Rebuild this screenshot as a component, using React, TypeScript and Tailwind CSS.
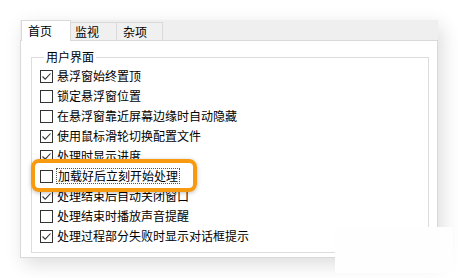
import React from 'react';

const options = [
  { label: '悬浮窗始终置顶', checked: true },
  { label: '锁定悬浮窗位置', checked: false },
  { label: '在悬浮窗靠近屏幕边缘时自动隐藏', checked: false },
  { label: '使用鼠标滑轮切换配置文件', checked: true },
  { label: '处理时显示进度', checked: true },
  { label: '加载好后立刻开始处理', checked: false, focused: true },
  { label: '处理结束后自动关闭窗口', checked: true },
  { label: '处理结束时播放声音提醒', checked: false },
  { label: '处理过程部分失败时显示对话框提示', checked: true },
];

const CheckBox = ({ checked }: { checked: boolean }) => (
  <span className="w-[13px] h-[13px] border border-[#333] bg-white flex items-center justify-center shrink-0">
    {checked && (
      <svg width="11" height="11" viewBox="0 0 11 11">
        <path d="M1.5 5.5 L4.2 8.2 L9.5 2.5" fill="none" stroke="#333" strokeWidth="1.1" />
      </svg>
    )}
  </span>
);

const App = () => {
  return (
    <div
      className="relative w-[458px] h-[278px] bg-white pt-[20px] pl-[20px] text-[12px] text-black"
      style={{ fontFamily: '"Noto Sans CJK SC", "Noto Sans", sans-serif' }}
    >
      <div className="w-[418px] h-[238px] flex flex-col bg-[#efefef] shadow-[4px_6px_18px_rgba(0,0,0,0.14)]">
        {/* tabs */}
        <div className="flex h-[20px] items-end pl-[1px]">
          <div className="relative z-10 h-[21px] w-[50px] -mb-px bg-white border border-b-0 border-[#d9d9d9] pl-[6px] leading-[20px]">
            首页
          </div>
          <div className="h-[18px] w-[46px] bg-[#f0f0f0] border border-b-0 border-l-0 border-[#d9d9d9] pl-[4px] leading-[18px]">
            监视
          </div>
          <div className="h-[18px] w-[46px] bg-[#f0f0f0] border border-b-0 border-l-0 border-[#d9d9d9] pl-[6px] leading-[18px]">
            杂项
          </div>
        </div>

        {/* page */}
        <div className="flex-1 bg-white border border-[#d9d9d9] pl-[10px] pr-[8px] pt-[8px] pb-[4px] flex">
          <fieldset className="flex-1 border border-[#dcdcdc] pl-[8px] pt-[0px]">
            <legend className="px-[2px] ml-[4px] leading-[16px]">用户界面</legend>
            <div className="flex flex-col pt-[1px]">
              {options.map((o) => (
                <div key={o.label} className="h-[20px] flex items-center gap-[4px]">
                  <CheckBox checked={o.checked} />
                  <span
                    className={
                      o.focused
                        ? 'leading-[14px] border border-dotted border-[#555] px-[1px] -ml-[1px]'
                        : 'leading-[14px]'
                    }
                  >
                    {o.label}
                  </span>
                </div>
              ))}
            </div>
          </fieldset>
        </div>
      </div>

      {/* orange highlight */}
      <div className="absolute left-[31px] top-[159px] w-[166px] h-[33px] rounded-[8px] border-[4px] border-[#f89a10] shadow-[0_1px_4px_rgba(0,0,0,0.25)]" />

      {/* white cover on bottom-right */}
      <div className="absolute left-[335px] top-[227px] w-[118px] h-[46px] bg-[#fefefe]" />
    </div>
  );
};

export default App;
